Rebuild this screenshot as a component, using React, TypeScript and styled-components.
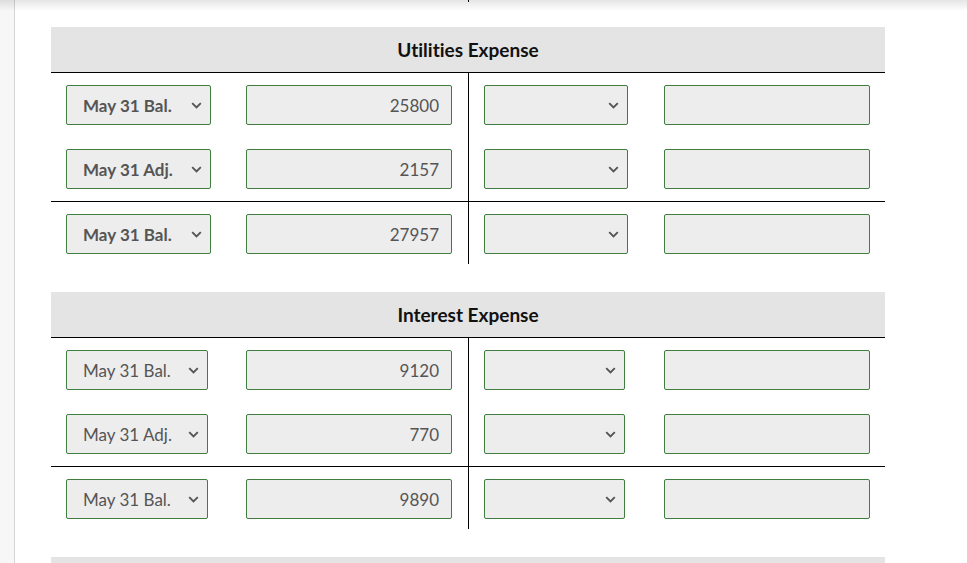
import React from 'react'
import styled, { createGlobalStyle } from 'styled-components'

interface Entry {
  label: string
  amount: string
}

interface Account {
  title: string
  bold: boolean
  labelWidth: number
  rightWidth: number
  entries: Entry[]
  total: Entry
}

const accounts: Account[] = [
  {
    title: 'Utilities Expense',
    bold: true,
    labelWidth: 145,
    rightWidth: 144,
    entries: [
      { label: 'May 31 Bal.', amount: '25800' },
      { label: 'May 31 Adj.', amount: '2157' },
    ],
    total: { label: 'May 31 Bal.', amount: '27957' },
  },
  {
    title: 'Interest Expense',
    bold: false,
    labelWidth: 142,
    rightWidth: 141,
    entries: [
      { label: 'May 31 Bal.', amount: '9120' },
      { label: 'May 31 Adj.', amount: '770' },
    ],
    total: { label: 'May 31 Bal.', amount: '9890' },
  },
  {
    title: '',
    bold: false,
    labelWidth: 142,
    rightWidth: 141,
    entries: [],
    total: { label: '', amount: '' },
  },
]

const GlobalStyle = createGlobalStyle`
  html, body {
    margin: 0;
    padding: 0;
    background: #fff;
    font-family: Lato, "Liberation Sans", Arial, sans-serif;
    font-variant-ligatures: none;
    overflow: hidden;
  }
  body::before {
    content: '';
    position: fixed;
    top: 0;
    left: 0;
    right: 0;
    height: 11px;
    background: linear-gradient(rgba(0, 0, 0, 0.1), rgba(0, 0, 0, 0));
    pointer-events: none;
    z-index: 5;
  }
`

const Page = styled.div`
  display: flex;
  height: 563px;
`

const Rail = styled.div`
  width: 14px;
  flex: none;
  background: #f7f7f7;
  border-right: 1px solid #d6d6d6;
`

const Main = styled.main`
  flex: 1;
  padding-left: 36px;
`

const Content = styled.div`
  width: 834px;
`

const Tail = styled.div`
  display: grid;
  grid-template-columns: 418px 416px;
  height: 2px;
  margin-bottom: 25px;
  div:first-child {
    border-right: 1px solid #000;
  }
`

const TAccount = styled.section`
  margin-bottom: 28px;
`

const Header = styled.h3`
  margin: 0;
  height: 45px;
  background: #e4e4e4;
  border-bottom: 1px solid #000;
  display: flex;
  align-items: center;
  justify-content: center;
  font-size: 19px;
  font-weight: 700;
  color: #111;
`

const Block = styled.div<{ $ruled?: boolean }>`
  display: grid;
  grid-template-columns: 418px 416px;
  border-top: ${p => (p.$ruled ? '1px solid #000' : 'none')};
`

const Side = styled.div<{ $top: number; $bottom: number; $left?: boolean }>`
  display: flex;
  flex-direction: column;
  gap: 24px;
  padding: ${p => p.$top}px ${p => (p.$left ? 16 : 15)}px ${p => p.$bottom}px 15px;
  border-right: ${p => (p.$left ? '1px solid #000' : 'none')};
`

const Row = styled.div`
  display: flex;
  justify-content: space-between;
  align-items: center;
`

const SelectWrap = styled.div<{ $width: number }>`
  position: relative;
  width: ${p => p.$width}px;
  height: 40px;
`

const Select = styled.select<{ $bold: boolean }>`
  appearance: none;
  -webkit-appearance: none;
  width: 100%;
  height: 100%;
  box-sizing: border-box;
  border: 1px solid #3f7e3f;
  border-radius: 2px;
  background: #ededed;
  padding: 0 24px 0 16px;
  font-family: Lato, "Liberation Sans", Arial, sans-serif;
  font-variant-ligatures: none;
  font-size: 17px;
  font-weight: ${p => (p.$bold ? 700 : 400)};
  color: #555;
  outline: none;
`

const Chevron = styled.svg`
  position: absolute;
  right: 9px;
  top: 17px;
  width: 11px;
  height: 7px;
  pointer-events: none;
`

const Amount = styled.input`
  width: 206px;
  height: 40px;
  box-sizing: border-box;
  border: 1px solid #3f7e3f;
  border-radius: 2px;
  background: #ededed;
  padding: 0 12px;
  text-align: right;
  font-family: Lato, "Liberation Sans", Arial, sans-serif;
  font-size: 17px;
  color: #555;
  outline: none;
`

const Dropdown: React.FC<{ value: string; width: number; bold: boolean }> = ({ value, width, bold }) => (
  <SelectWrap $width={width}>
    <Select $bold={bold} value={value} onChange={() => {}}>
      <option value="">{''}</option>
      <option value="May 31 Bal.">May 31 Bal.</option>
      <option value="May 31 Adj.">May 31 Adj.</option>
    </Select>
    <Chevron viewBox="0 0 11 7">
      <path d="M1.2 1.2l4.3 4.3 4.3-4.3" fill="none" stroke="#555" strokeWidth="1.9" />
    </Chevron>
  </SelectWrap>
)

const Line: React.FC<{ entry?: Entry; width: number; bold: boolean }> = ({ entry, width, bold }) => (
  <Row>
    <Dropdown value={entry ? entry.label : ''} width={width} bold={bold} />
    <Amount value={entry ? entry.amount : ''} onChange={() => {}} />
  </Row>
)

export default function App() {
  return (
    <Page>
      <GlobalStyle />
      <Rail />
      <Main>
        <Content>
          <Tail>
            <div />
            <div />
          </Tail>
          {accounts.map((acc, n) => (
            <TAccount key={n}>
              <Header>{acc.title}</Header>
              <Block>
                <Side $left $top={12} $bottom={12}>
                  {acc.entries.map((e, i) => (
                    <Line key={i} entry={e} width={acc.labelWidth} bold={acc.bold} />
                  ))}
                </Side>
                <Side $top={12} $bottom={12}>
                  {acc.entries.map((_, i) => (
                    <Line key={i} width={acc.rightWidth} bold={acc.bold} />
                  ))}
                </Side>
              </Block>
              <Block $ruled>
                <Side $left $top={12} $bottom={10}>
                  <Line entry={acc.total} width={acc.labelWidth} bold={acc.bold} />
                </Side>
                <Side $top={12} $bottom={10}>
                  <Line width={acc.rightWidth} bold={acc.bold} />
                </Side>
              </Block>
            </TAccount>
          ))}
        </Content>
      </Main>
    </Page>
  )
}
